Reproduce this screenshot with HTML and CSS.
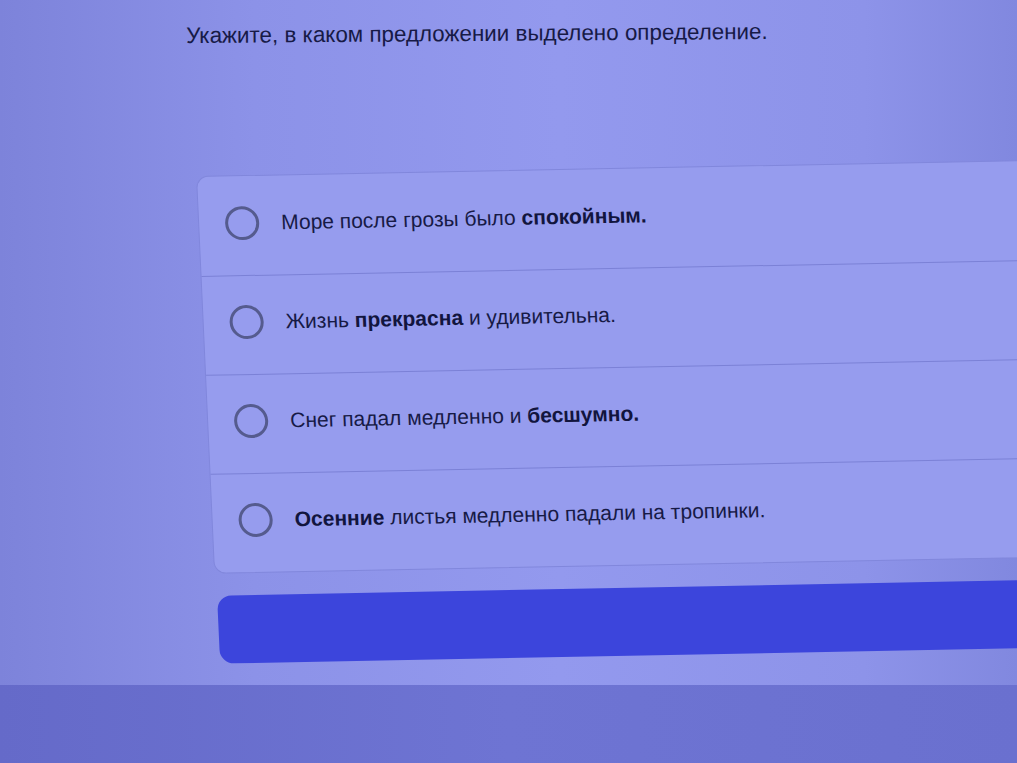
FILE: index.html
```html
<!DOCTYPE html>
<html lang="ru">
<head>
    <meta charset="UTF-8">
    <meta name="viewport" content="width=device-width, initial-scale=1.0">
    <title>Тест</title>
    <link rel="stylesheet" href="styles.css">
</head>
<body>
    <div class="screen">
        <p class="question">Укажите, в каком предложении выделено определение.</p>
        <div class="quiz">
            <div class="card">
                <label class="option">
                    <span class="radio"></span>
                    <span class="text">Море после грозы было <b>спокойным.</b></span>
                </label>
                <label class="option">
                    <span class="radio"></span>
                    <span class="text">Жизнь <b>прекрасна</b> и удивительна.</span>
                </label>
                <label class="option">
                    <span class="radio"></span>
                    <span class="text">Снег падал медленно и <b>бесшумно.</b></span>
                </label>
                <label class="option">
                    <span class="radio"></span>
                    <span class="text"><b>Осенние</b> листья медленно падали на тропинки.</span>
                </label>
            </div>
            <div class="submit"></div>
        </div>
    </div>
    <div class="bezel"></div>
</body>
</html>
```

FILE: styles.css
```css
* {
    margin: 0;
    box-sizing: border-box;
}

body {
    font-family: "Liberation Sans", Arial, sans-serif;
    color: #171a46;
    overflow: hidden;
    background: #8a90e6;
}

.screen {
    height: 685px;
    padding-top: 23px;
    background: linear-gradient(90deg, #7d83da 0%, #8c92e8 25%, #9399ee 55%, #8d93e9 85%, #8188df 100%);
}

.question {
    margin-left: 186px;
    font-size: 22.4px;
    transform: rotate(-0.4deg);
    transform-origin: left top;
}

.quiz {
    margin-top: 127px;
    margin-left: 196px;
    margin-right: -60px;
    transform: rotate(-1.1deg) skewX(1.5deg);
    transform-origin: left top;
}

.card {
    background: #969cee;
    border: 1px solid #8187dc;
    border-radius: 12px;
}

.option {
    display: flex;
    align-items: center;
    gap: 22px;
    height: 99px;
    padding-left: 26px;
    padding-bottom: 6px;
    border-top: 1px solid #7b81d6;
    font-size: 21px;
}

.option:first-child {
    border-top: none;
}

.radio {
    width: 34px;
    height: 34px;
    border: 3px solid #555b8e;
    border-radius: 50%;
    flex-shrink: 0;
}

.text b {
    color: #12153e;
}

.submit {
    margin-top: 22px;
    margin-left: 2px;
    height: 68px;
    background: #3c45dc;
    border-radius: 14px;
}

.bezel {
    height: 78px;
    background: linear-gradient(90deg, #656ac9 0%, #6e74d3 50%, #6a70cf 100%);
}
```
